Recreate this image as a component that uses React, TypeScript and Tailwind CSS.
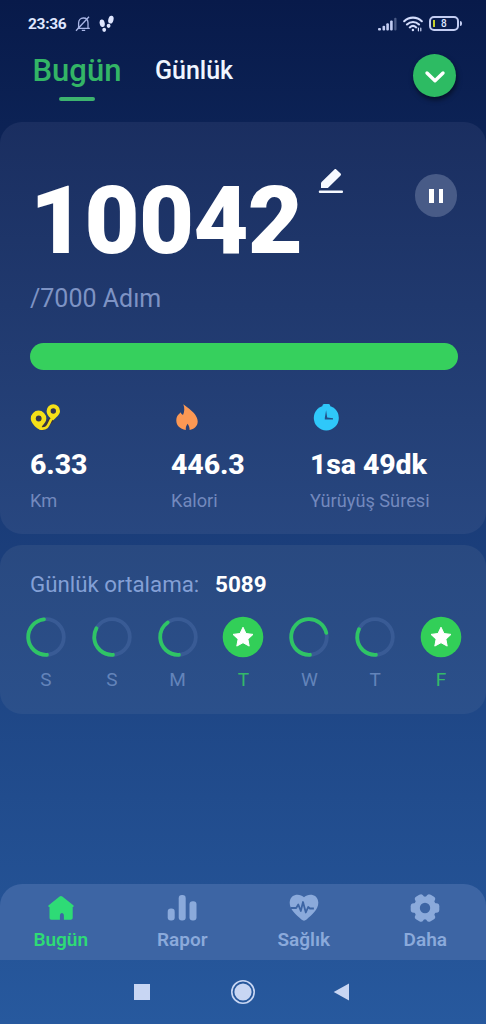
import type { ReactNode } from 'react'

type Day = { label: string; progress: number }

const days: Day[] = [
  { label: 'S', progress: 0.49 },
  { label: 'S', progress: 0.34 },
  { label: 'M', progress: 0.41 },
  { label: 'T', progress: 1 },
  { label: 'W', progress: 0.72 },
  { label: 'T', progress: 0.33 },
  { label: 'F', progress: 1 },
]

function StatusBar() {
  return (
    <div className="flex h-[46px] items-center pl-[28px] pr-[24px] pt-[1px] text-[#dfe6ff]">
      <span className="w-[39px] whitespace-nowrap text-[15.5px] font-bold leading-5 tracking-[-0.3px]">23:36</span>
      <svg className="ml-[8px]" width="16" height="16" viewBox="0 0 16 16" fill="none" stroke="#a9b6e6" strokeWidth="1.3">
        <path d="M2.2 12.3h12.6M3.6 12V7c0-3 2-5 4.8-5s4.6 2 4.6 5v5M6.8 14.3h3.4M1 14.8 14 .8" />
      </svg>
      <svg className="ml-[8px]" width="16" height="18" viewBox="0 0 16 18" fill="#dfe6ff">
        <ellipse cx="3.2" cy="8.3" rx="2.5" ry="3.8" transform="rotate(-12 3.2 8.3)" />
        <ellipse cx="5.2" cy="14.8" rx="1.9" ry="2.1" />
        <ellipse cx="11.9" cy="4.6" rx="2.6" ry="4" transform="rotate(14 11.9 4.6)" />
        <ellipse cx="9.6" cy="10.8" rx="1.9" ry="2.1" />
      </svg>
      <div className="ml-auto flex items-center">
        <svg width="20" height="14" viewBox="0 0 20 14" fill="#c3cdf2">
          <rect x="0" y="11" width="3" height="2.6" rx="1" />
          <rect x="4.5" y="8.7" width="2.6" height="4.9" rx="1" />
          <rect x="8.3" y="6.2" width="2.6" height="7.4" rx="1" />
          <rect x="12.1" y="3.4" width="2.6" height="10.2" rx="1" />
          <rect x="16.2" y="0.8" width="2.3" height="12.8" rx="1" opacity="0.35" />
        </svg>
        <svg className="ml-[5px]" width="20" height="16" viewBox="0 0 20 16" fill="none" stroke="#d3dcfb" strokeWidth="2.1" strokeLinecap="round">
          <path d="M1.2 5.2c5-4.8 12.6-4.8 17.6 0M4 8.4c3.4-3.3 8.6-3.3 12 0M6.8 11.4c1.9-1.8 4.5-1.8 6.4 0" />
          <circle cx="9.9" cy="14" r="1.2" fill="#d3dcfb" stroke="none" />
          <path d="M15.4 12.2v2.6M17.8 12.2v2.6" strokeWidth="1.2" />
        </svg>
        <div className="ml-[6px] flex h-[15px] w-[30px] items-center rounded-[5px] border-2 border-[#c3cdf2] pl-[2px]">
          <span className="h-[7px] w-[2px] bg-[#c5cf2c]" />
          <span className="ml-[6px] text-[10px] font-medium leading-[11px]">8</span>
        </div>
        <span className="ml-[1px] h-[5px] w-[2px] rounded-r bg-[#c3cdf2]" />
      </div>
    </div>
  )
}

function Header() {
  return (
    <header className="flex h-[76px] items-start pl-[32px] pr-[30px]">
      <div className="flex w-[90px] flex-col items-center pt-[6px]">
        <span className="text-[31px] font-medium leading-[38px] text-[#33b566]">Bugün</span>
        <span className="mt-[7px] h-[4px] w-[36px] rounded-full bg-[#3db36f]" />
      </div>
      <span className="ml-[33px] pt-[10px] text-[25px] font-medium leading-[30px] text-[#f0f6ff]">Günlük</span>
      <button
        aria-label="Menü"
        className="ml-auto mt-[8px] flex h-[43px] w-[43px] items-center justify-center rounded-full bg-[#2dbb63] shadow-[1px_3px_5px_rgba(0,0,0,0.5)]"
      >
        <svg className="mt-[2px]" width="22" height="14" viewBox="0 0 22 14" fill="none" stroke="#fff" strokeWidth="3.4" strokeLinecap="round" strokeLinejoin="round">
          <path d="m3 3 8 7.8L19 3" />
        </svg>
      </button>
    </header>
  )
}

type StatProps = { icon: ReactNode; value: string; label: string }

function Stat({ icon, value, label }: StatProps) {
  return (
    <div className="whitespace-nowrap">
      <div className="flex h-[32px] items-center">{icon}</div>
      <div className="mt-[16px] text-[28.5px] font-extrabold leading-[32px] tracking-[-0.1px] text-white">{value}</div>
      <div className="mt-[8px] text-[18.2px] leading-[24px] text-[#7389bd]">{label}</div>
    </div>
  )
}

function RouteIcon() {
  return (
    <svg width="31" height="28" viewBox="0 0 31 28">
      <path d="M12 25c5-1 5.5-6 10.5-9" fill="none" stroke="#3a3440" strokeWidth="5" />
      <path d="M10 25.4c7 1.3 8-2.4 11-8.9" fill="none" stroke="#f5e018" strokeWidth="2.6" strokeLinecap="round" />
      <path
        d="M8.5 7.6a7.8 7.8 0 0 1 7.8 7.8c0 3.4-2.1 5-4.1 7.5-1 1.4-.3 2.3 1 3.1-1.8.8-4.5.7-6.2-.9C4.2 22.6.8 19.3.8 15.4a7.8 7.8 0 0 1 7.7-7.8Z"
        fill="#f5e018"
      />
      <path d="M23.3 1.2A6.7 6.7 0 0 1 30 7.9c0 4.2-4.5 6.6-7 9.5-2.5-2.5-6.4-5.3-6.4-9.5a6.7 6.7 0 0 1 6.7-6.7Z" fill="#f5e018" />
      <circle cx="8.7" cy="15.5" r="2.9" fill="#33364f" />
      <circle cx="23.3" cy="8" r="2.7" fill="#33364f" />
    </svg>
  )
}

function FlameIcon() {
  return (
    <svg className="ml-[5px]" width="22" height="27" viewBox="0 0 22 27" fill="#fb9854">
      <path d="M7.3.3 13.5 5c3.5 3 8.2 7 8.2 12.5 0 4.5-3.7 7.8-8.1 8.5.2-2.6-.9-4.4-2.1-6.200-1.200 1.900-1.900 3.400-1.700 6.200C4 25 .3 21.500.3 16.500c0-5 3.200-6.500 4.500-8.200l.5 1.500L7 11c1.500-3 1.800-7 .3-10.700Z" />
    </svg>
  )
}

function TimerIcon() {
  return (
    <svg className="ml-[3px]" width="27" height="28" viewBox="0 0 27 28">
      <rect x="9.5" y="0.9" width="7.6" height="5" rx="1.5" fill="#2fc8fa" />
      <circle cx="13.3" cy="14.9" r="12.5" fill="#2fc8fa" />
      <path d="M13.1 7.2 14.2 14.6 20 15.2v1.2h-8.2v-1.5Z" fill="#245189" />
    </svg>
  )
}

function StepsCard() {
  return (
    <section className="h-[412px] rounded-[22px] bg-linear-to-b from-[#1a2e60] to-[#284780] px-[30px]">
      <div className="flex h-[158px] items-start">
        <span className="w-[278px] pt-[43px] text-[95px] font-black leading-[112px] tracking-[-0.6px] text-white">10042</span>
        <svg className="ml-[9px] mt-[46px]" width="28" height="27" viewBox="0 0 28 27" fill="#f6f9ff">
          <path d="M4 20v-4.5c0-.6.2-1 .6-1.4L17.4 1.4c.6-.6 1.3-.6 1.9 0l4.300 4.200c.6.600.6 1.200 0 1.800L11.400 19.400c-.4.400-.8.600-1.400.6Z" />
          <rect x="1.8" y="22.6" width="24.2" height="2.4" rx="1" />
        </svg>
        <button
          aria-label="Duraklat"
          className="ml-auto mr-[-1px] mt-[52px] flex h-[43px] w-[42px] items-center justify-center gap-[5px] rounded-full bg-[#485b87]"
        >
          <span className="h-[14px] w-[4.5px] bg-white" />
          <span className="h-[14px] w-[4.5px] bg-white" />
        </button>
      </div>
      <div className="pt-[4px] text-[25px] leading-[30px] text-[#7e93c4]">/7000 Adım</div>
      <div className="mt-[29px] h-[27px] w-[428px] rounded-full bg-[#36d05d]" />
      <div className="mt-[31px] grid grid-cols-[141px_139px_auto]">
        <Stat icon={<RouteIcon />} value="6.33" label="Km" />
        <Stat icon={<FlameIcon />} value="446.3" label="Kalori" />
        <Stat icon={<TimerIcon />} value="1sa 49dk" label="Yürüyüş Süresi" />
      </div>
    </section>
  )
}

function DayRing({ label, progress }: Day) {
  const done = progress >= 1
  return (
    <div className="flex flex-col items-center">
      <svg width="42" height="42" viewBox="0 0 42 42">
        {done ? (
          <>
            <circle cx="21" cy="21" r="20.3" fill="#32cf58" />
            <path
              d="m21 11.2 3 6.3 7 .9-5.1 4.8 1.3 6.9-6.2-3.4-6.2 3.4 1.3-6.9-5.1-4.8 7-.9Z"
              fill="#fff"
              stroke="#fff"
              strokeWidth="1"
              strokeLinejoin="round"
            />
          </>
        ) : (
          <>
            <circle cx="21" cy="21" r="17.8" fill="none" stroke="#395b95" strokeWidth="3.8" />
            <circle
              cx="21"
              cy="21"
              r="17.8"
              fill="none"
              stroke="#2fc565"
              strokeWidth="3.8"
              strokeLinecap="round"
              pathLength="100"
              strokeDasharray={`${progress * 100} 100`}
              transform="rotate(87 21 21)"
            />
          </>
        )}
      </svg>
      <span className={done ? 'mt-[10px] text-[19px] leading-[24px] text-[#34b869]' : 'mt-[10px] text-[19px] leading-[24px] text-[#6384ba]'}>
        {label}
      </span>
    </div>
  )
}

function WeekCard() {
  return (
    <section className="mt-[11px] h-[169px] rounded-[22px] bg-linear-to-b from-[#294980] to-[#2b508b] pt-[24px]">
      <div className="flex h-[29px] items-center pl-[30px] leading-[28px]">
        <span className="w-[185px] text-[22.3px] text-[#84a0d6]">Günlük ortalama:</span>
        <span className="text-[22.5px] font-bold text-white">5089</span>
      </div>
      <div className="mt-[18px] flex justify-between pl-[25px] pr-[24px]">
        {days.map((day, i) => (
          <DayRing key={i} {...day} />
        ))}
      </div>
    </section>
  )
}

function NavItem({ icon, label, active }: { icon: ReactNode; label: string; active?: boolean }) {
  return (
    <div className={active ? 'flex w-[121.5px] flex-col items-center text-[#2edb76]' : 'flex w-[121.5px] flex-col items-center text-[#8baadb]'}>
      <div className="flex h-[30px] items-center">{icon}</div>
      <span className="mt-[6px] text-[19px] font-semibold leading-[22px]">{label}</span>
    </div>
  )
}

const gearTeeth = [0, 60, 120, 180, 240, 300]

function BottomNav() {
  return (
    <nav className="mt-auto flex h-[76px] shrink-0 rounded-t-[22px] bg-[#3d65a4] pt-[9px]">
      <NavItem
        active
        label="Bugün"
        icon={
          <svg width="28" height="26" viewBox="0 0 28 26" fill="currentColor">
            <path d="M12.6 1.5a2 2 0 0 1 2.7 0L26.3 10.2c.8.7.5 1.8-.5 1.8h-.1v10.8c0 1.3-.7 2-2 2h-6.8v-4.1c0-3.6-4-3.6-4 0v4.1H4.5c-1.3 0-2-.7-2-2V12h-.3c-1 0-1.3-1.1-.5-1.8Z" />
          </svg>
        }
      />
      <NavItem
        label="Rapor"
        icon={
          <svg width="30" height="28" viewBox="0 0 30 28" fill="currentColor">
            <rect x="0.7" y="14.5" width="7" height="12" rx="3.2" />
            <rect x="11.7" y="1" width="7" height="25.5" rx="3.2" />
            <rect x="22.5" y="7.2" width="7" height="19.3" rx="3.2" />
          </svg>
        }
      />
      <NavItem
        label="Sağlık"
        icon={
          <svg width="30" height="28" viewBox="0 0 30 28" fill="currentColor">
            <path d="M15 3.2C19-1 29-.6 29.3 8.5c.2 6.8-6 12-11.7 17a3.9 3.9 0 0 1-5.2 0C6.7 20.5.5 15.3.7 8.5 1-.6 11-1 15 3.2Z" />
            <path d="M1.5 14h5.7l2.1-3.5 2.5 6.5 2.2-9 2.8 10.5 2.4-5.5 1.7 1.5h4" fill="none" stroke="#3d65a4" strokeWidth="1.8" strokeLinejoin="round" />
          </svg>
        }
      />
      <NavItem
        label="Daha"
        icon={
          <svg width="30" height="28" viewBox="0 0 30 28" fill="currentColor">
            {gearTeeth.map((angle) => (
              <rect key={angle} x="20" y="9.3" width="9.3" height="9.4" rx="3" transform={`rotate(${angle} 15 14)`} />
            ))}
            <circle cx="15" cy="14" r="11.4" />
            <circle cx="15" cy="14" r="5.2" fill="#3d65a4" />
          </svg>
        }
      />
    </nav>
  )
}

function SystemNav() {
  return (
    <div className="flex h-[64px] shrink-0 items-center pl-[134px] text-[#c8d6f3]">
      <span className="h-[16px] w-[16px] bg-current" />
      <svg className="ml-[80px]" width="26" height="26" viewBox="0 0 26 26">
        <circle cx="13" cy="13" r="11.2" fill="none" stroke="currentColor" strokeWidth="1.6" />
        <circle cx="13" cy="13" r="8.6" fill="currentColor" />
      </svg>
      <svg className="ml-[77px]" width="17" height="18" viewBox="0 0 17 18" fill="currentColor">
        <path d="M16 .5v17L.7 9Z" />
      </svg>
    </div>
  )
}

export default function App() {
  return (
    <main className="flex h-[1024px] w-[486px] flex-col overflow-hidden bg-linear-to-b from-[#081a4a] via-[#1a3c78] to-[#27599e] font-['Roboto',sans-serif]">
      <StatusBar />
      <Header />
      <StepsCard />
      <WeekCard />
      <BottomNav />
      <SystemNav />
    </main>
  )
}
